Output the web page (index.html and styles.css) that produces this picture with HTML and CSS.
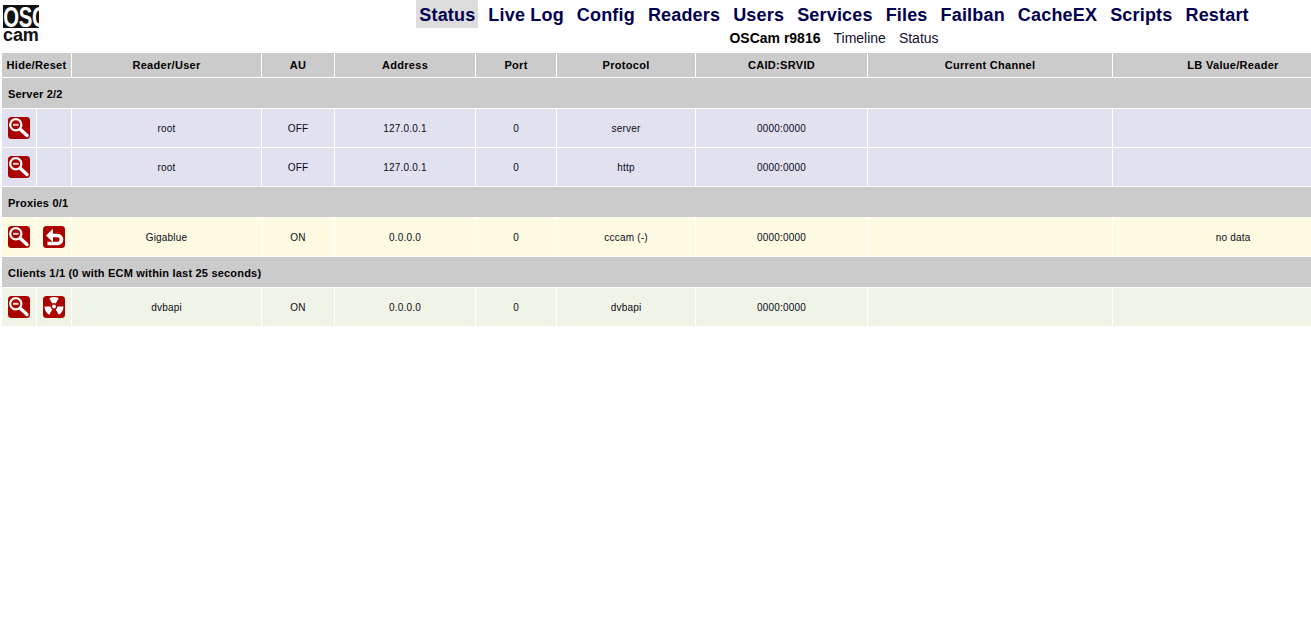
FILE: index.html
```html
<!DOCTYPE html>
<html lang="en">
<head>
<meta charset="utf-8">
<title>OSCam</title>
<link rel="stylesheet" href="styles.css">
</head>
<body>
<header class="top">
  <div class="logo">
    <div class="logo-box"><span class="logo-os">OSC</span></div>
    <div class="logo-cam">cam</div>
  </div>
  <div class="nav-wrap">
    <nav class="menu">
      <a class="item active">Status</a><a class="item">Live Log</a><a class="item">Config</a><a class="item">Readers</a><a class="item">Users</a><a class="item">Services</a><a class="item">Files</a><a class="item">Failban</a><a class="item">CacheEX</a><a class="item">Scripts</a><a class="item">Restart</a>
    </nav>
    <div class="submenu"><b class="ver">OSCam r9816</b><a class="sub">Timeline</a><a class="sub">Status</a></div>
  </div>
</header>
<svg class="defs" width="0" height="0" aria-hidden="true">
  <defs>
    <symbol id="i-search" viewBox="0 0 22 22">
      <rect width="22" height="22" rx="3.5" fill="#ab0000"/>
      <path d="M12.500 12.500L19 18.500" stroke="#fff" stroke-width="3.400" stroke-linecap="round"/>
      <circle cx="7.800" cy="7.800" r="5.600" fill="#ab0000" stroke="#fff" stroke-width="2.200"/>
      <rect x="5" y="6.800" width="5.600" height="2" fill="#f8dcdc"/>
    </symbol>
    <symbol id="i-back" viewBox="0 0 22 22">
      <rect width="22" height="22" rx="3.5" fill="#ab0000"/>
      <path d="M3 9.500L10 2.800V16.200z" fill="#fff"/>
      <path d="M9 9.500H14.500a4 4 0 0 1 0 8H4.500" fill="none" stroke="#fff" stroke-width="3.600"/>
    </symbol>
    <symbol id="i-nuke" viewBox="0 0 22 22">
      <rect width="22" height="22" rx="3.5" fill="#ab0000"/>
      <circle cx="11" cy="10.500" r="1.900" fill="#fff"/>
      <path d="M6.250 2.270A9.500 9.500 0 0 1 15.750 2.270L12.750 7.470A3.500 3.500 0 0 0 9.250 7.470z" fill="#fff"/>
      <path d="M20.500 10.500A9.500 9.500 0 0 1 15.750 18.730L12.750 13.530A3.500 3.500 0 0 0 14.500 10.500z" fill="#fff"/>
      <path d="M1.500 10.500A9.500 9.500 0 0 0 6.250 18.730L9.250 13.530A3.500 3.500 0 0 1 7.500 10.500z" fill="#fff"/>
    </symbol>
  </defs>
</svg>
<table class="status">
  <colgroup>
    <col class="c1"><col class="c2"><col class="c3"><col class="c4"><col class="c5"><col class="c6"><col class="c7"><col class="c8"><col class="c9"><col class="c10">
  </colgroup>
  <thead>
    <tr><th colspan="2">Hide/Reset</th><th>Reader/User</th><th>AU</th><th>Address</th><th>Port</th><th>Protocol</th><th>CAID:SRVID</th><th>Current Channel</th><th class="shift">LB Value/Reader</th></tr>
  </thead>
  <tbody>
    <tr class="group"><td colspan="10">Server 2/2</td></tr>
    <tr class="server"><td class="ic"><svg class="icon"><use href="#i-search"/></svg></td><td class="ic"></td><td>root</td><td>OFF</td><td>127.0.0.1</td><td>0</td><td>server</td><td>0000:0000</td><td></td><td></td></tr>
    <tr class="server"><td class="ic"><svg class="icon"><use href="#i-search"/></svg></td><td class="ic"></td><td>root</td><td>OFF</td><td>127.0.0.1</td><td>0</td><td>http</td><td>0000:0000</td><td></td><td></td></tr>
    <tr class="group"><td colspan="10">Proxies 0/1</td></tr>
    <tr class="proxy"><td class="ic"><svg class="icon"><use href="#i-search"/></svg></td><td class="ic"><svg class="icon"><use href="#i-back"/></svg></td><td>Gigablue</td><td>ON</td><td>0.0.0.0</td><td>0</td><td>cccam (-)</td><td>0000:0000</td><td></td><td class="shift">no data</td></tr>
    <tr class="group"><td colspan="10">Clients 1/1 (0 with ECM within last 25 seconds)</td></tr>
    <tr class="client"><td class="ic"><svg class="icon"><use href="#i-search"/></svg></td><td class="ic"><svg class="icon"><use href="#i-nuke"/></svg></td><td>dvbapi</td><td>ON</td><td>0.0.0.0</td><td>0</td><td>dvbapi</td><td>0000:0000</td><td></td><td></td></tr>
  </tbody>
</table>
</body>
</html>
```
FILE: styles.css
```css
html, body { margin: 0; padding: 0; background: #fff; }
body { font-family: "Liberation Sans", Arial, sans-serif; color: #000; overflow-x: hidden; }
.top { display: flex; height: 52px; }
.logo { width: 417px; box-sizing: border-box; padding: 5px 0 0 3px; flex: none; }
.logo-box { width: 36px; height: 23px; background: #111; overflow: hidden; }
.logo-os { display: block; width: 70px; white-space: nowrap; color: #fff; font: bold 29px/24px "Liberation Sans", sans-serif; transform: scaleX(.7); transform-origin: 1px 0; letter-spacing: -.5px; }
.logo-cam { font: bold 18px/13px "Liberation Sans", sans-serif; margin-top: 1px; color: #111; width: 37px; letter-spacing: -.1px; }
.nav-wrap { display: flex; flex-direction: column; align-items: center; flex: none; width: 834px; }
.menu { display: flex; gap: 7px; height: 28px; white-space: nowrap; flex: none; }
.item { padding: 0 3px; font-size: 18px; font-weight: bold; line-height: 30px; letter-spacing: .18px; color: #000050; }
.item.active { background: #ddd; }
.submenu { display: flex; gap: 13px; margin-top: 2px; font-size: 14px; line-height: 16px; }
.ver { color: #000; margin-right: 0; }
.sub { color: #101030; }
.defs { position: absolute; }
.status { border-collapse: separate; border-spacing: 1px; table-layout: fixed; width: 1311px; margin: 0 0 0 1px; font-size: 10px; letter-spacing: .2px; color: #0a0a1a; }
.c1, .c2 { width: 34px; }
.c3 { width: 189px; }
.c4 { width: 72px; }
.c5 { width: 140px; }
.c6 { width: 80px; }
.c7 { width: 138px; }
.c8 { width: 171px; }
.c9 { width: 244px; }
.c10 { width: 198px; }
.status th { background: #cbcbcb; height: 24px; padding: 0; font-size: 11px; font-weight: bold; letter-spacing: .3px; color: #000; text-align: center; }
.status td { padding: 0; text-align: center; height: 38px; }
.status tr.group td { background: #cbcbcb; height: 28px; text-align: left; padding: 2px 0 0 6px; font-size: 11px; font-weight: bold; color: #000; }
.server td { background: #e1e1ef; }
.proxy td { background: #fdfbe2; }
.client td { background: #f0f4e6; }
.icon { width: 22px; height: 22px; display: block; margin: 0 auto; }
.shift { padding-left: 42px !important; }
```
